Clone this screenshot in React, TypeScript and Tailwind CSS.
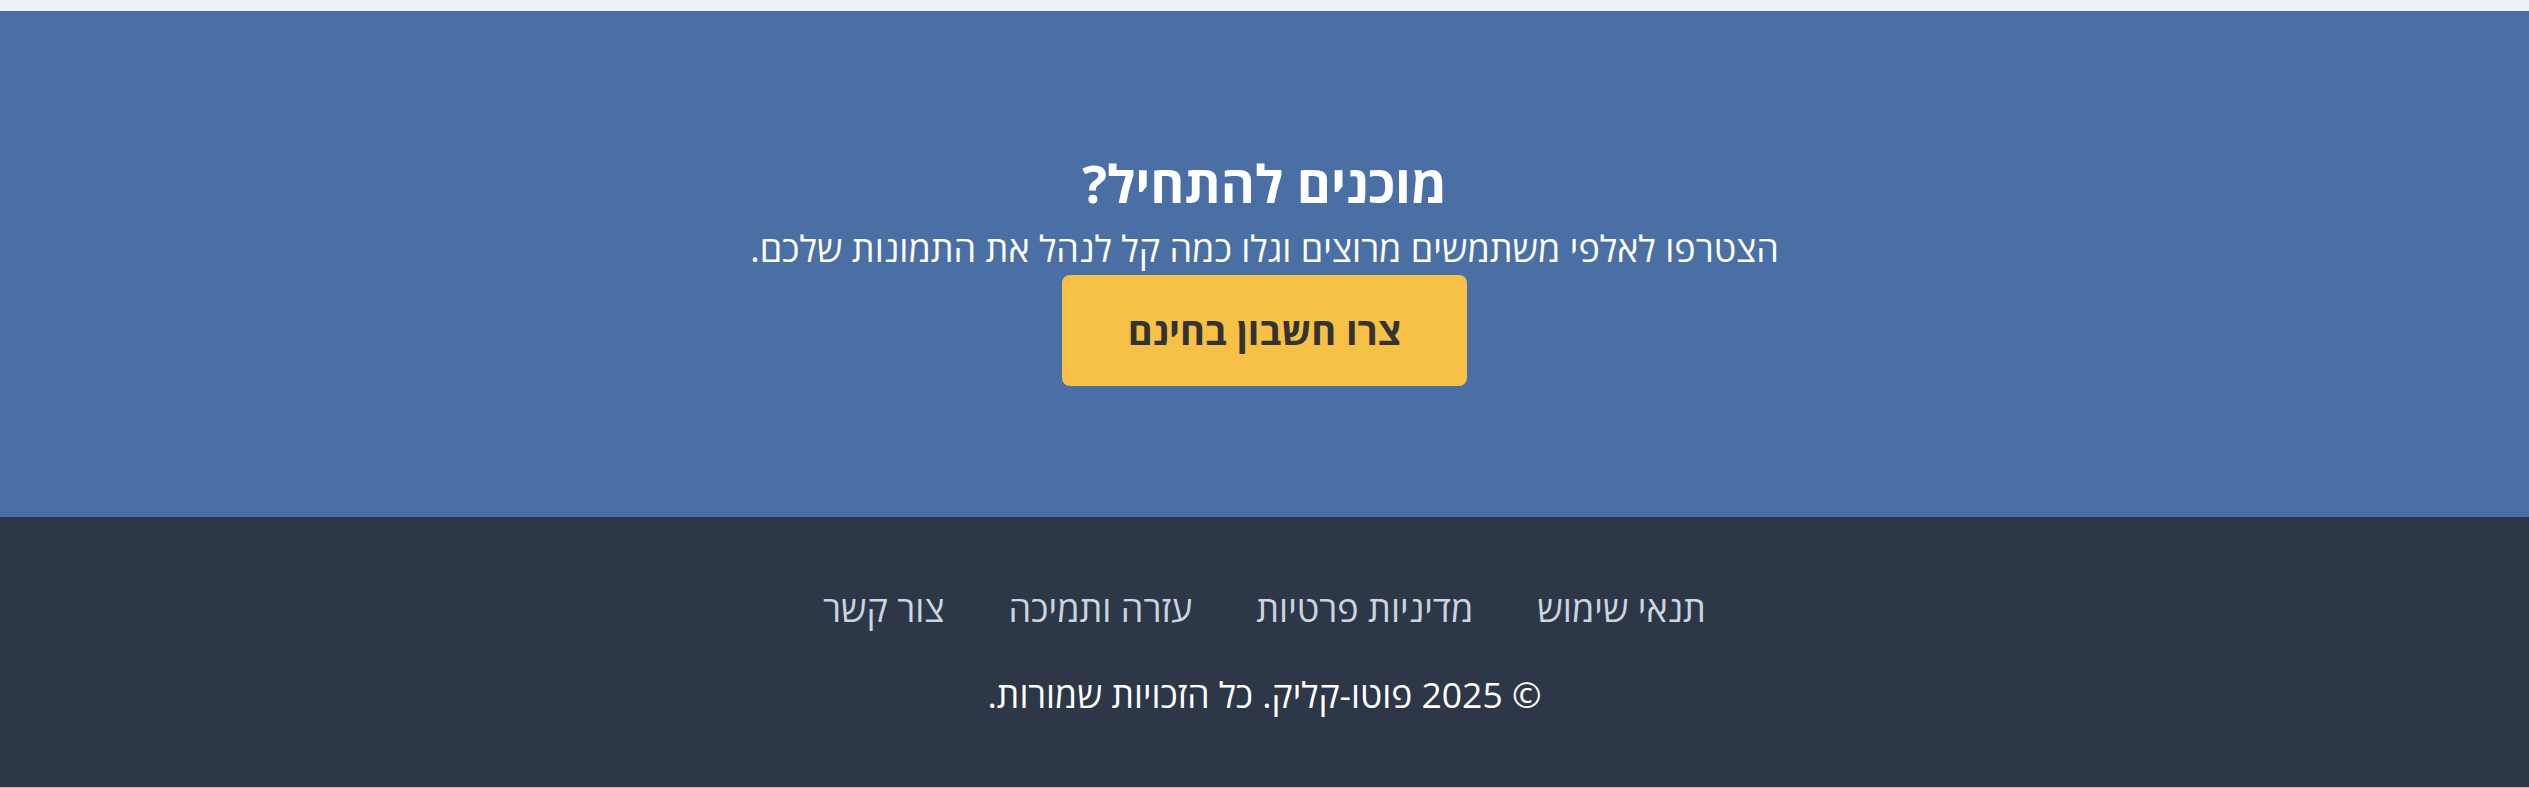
import React from "react";

export default function App() {
  const links = ["תנאי שימוש", "מדיניות פרטיות", "עזרה ותמיכה", "צור קשר"];
  return (
    <div dir="rtl" className="w-full bg-[#edf2f7] pt-[11px]" style={{ fontFamily: '"Open Sans", "Noto Sans", sans-serif' }}>
      <section className="h-[506px] bg-[#4a6fa5] flex flex-col items-center pt-[141px] text-white">
        <h2 className="text-[52px] font-bold leading-[62px] m-0">מוכנים להתחיל?</h2>
        <p className="mt-[10px] text-[36px] leading-[50px] m-0">הצטרפו לאלפי משתמשים מרוצים וגלו כמה קל לנהל את התמונות שלכם.</p>
        <a className="mt-[1px] flex items-center justify-center h-[111px] px-[66px] rounded-[8px] bg-[#f6c146] text-[#333333] text-[38px] font-bold">
          צרו חשבון בחינם
        </a>
      </section>
      <footer className="h-[271px] bg-[#2d3748] border-b border-[#b4b9c3] flex flex-col items-center pt-[65px]">
        <nav className="flex gap-[64px]">
          {links.map((l) => (
            <a key={l} className="text-[36px] text-[#cbd5e0] leading-[54px]">{l}</a>
          ))}
        </nav>
        <p className="mt-[31px] text-[35.5px] text-white leading-[54px]">© 2025 פוטו-קליק. כל הזכויות שמורות.</p>
      </footer>
    </div>
  );
}
